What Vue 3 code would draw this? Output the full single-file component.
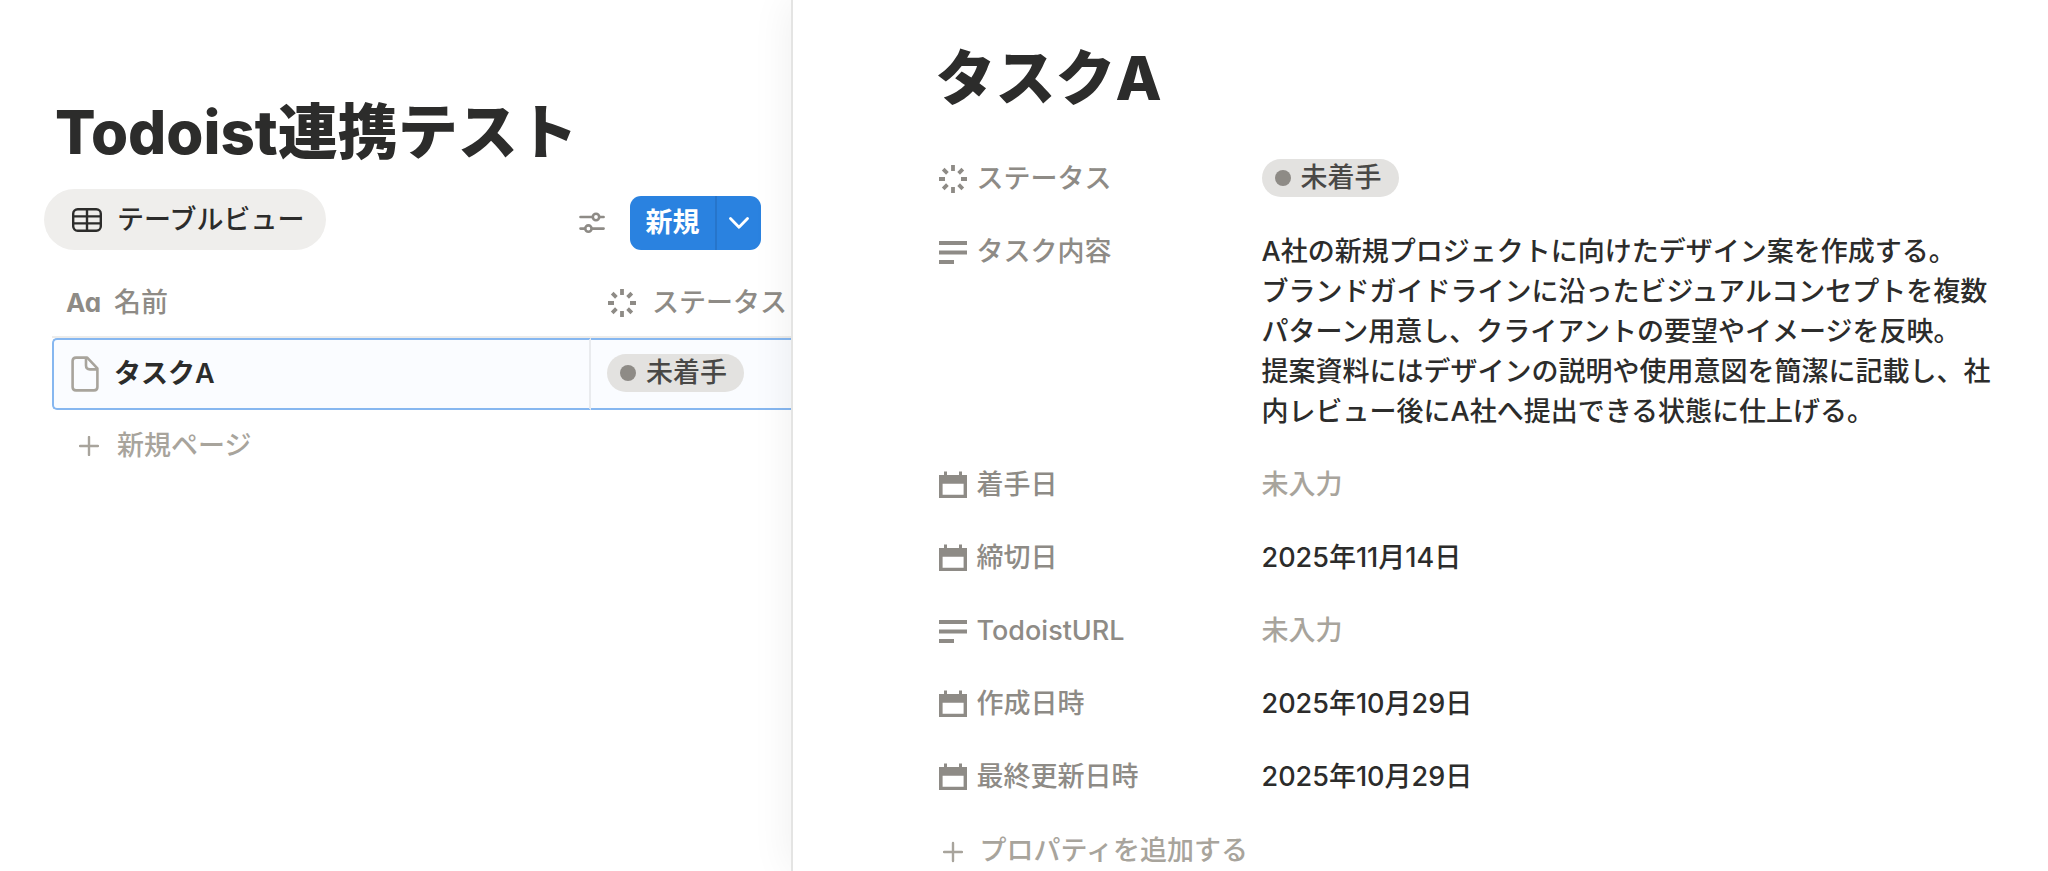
<template>
  <div class="layout">
    <main class="database">
      <h1 class="page-title">Todoist連携テスト</h1>
      <div class="toolbar">
        <button class="view-tab">
          <svg width="30" height="24" viewBox="0 0 30 24" fill="none" stroke="currentColor" stroke-width="2.4">
            <rect x="1.2" y="1.2" width="27.6" height="21.6" rx="4.5" />
            <path d="M1 8.4H29M1 15.4H29M15 1V23" />
          </svg>
          <span>テーブルビュー</span>
        </button>
        <div class="actions">
          <button class="settings" aria-label="設定">
            <svg width="26" height="22" viewBox="0 0 26 22" fill="none" stroke="currentColor" stroke-width="2.6" stroke-linecap="round">
              <circle cx="17" cy="5" r="3.2" />
              <circle cx="9.4" cy="16.6" r="3.2" />
              <path d="M1.5 5H13.6M20.4 5H24.6M1.5 16.6H6M12.8 16.6H24.6" />
            </svg>
          </button>
          <div class="new-group">
            <button class="new-main">新規</button>
            <button class="new-more" aria-label="その他">
              <svg width="20" height="12" viewBox="0 0 20 12" fill="none" stroke="currentColor" stroke-width="2.8" stroke-linecap="round" stroke-linejoin="round">
                <path d="M1.5 1.6L10 10.2L18.5 1.6" />
              </svg>
            </button>
          </div>
        </div>
      </div>

      <table class="table">
        <thead>
          <tr>
            <th class="col-name">
              <div class="head"><span class="aa">Aa</span><span>名前</span></div>
            </th>
            <th>
              <div class="head head-status">
                <svg width="28" height="28" viewBox="0 0 28 28" stroke="currentColor" stroke-width="3.8">
                  <path :d="rays" />
                </svg>
                <span>ステータス</span>
              </div>
            </th>
          </tr>
        </thead>
        <tbody>
          <tr>
            <td>
              <div class="name">
                <svg width="28" height="36" viewBox="0 0 28 36" fill="none" stroke="currentColor" stroke-width="2.6" stroke-linejoin="round">
                  <path d="M5 1.6H16.2L26.4 12.4V31Q26.4 34.4 23 34.4H5Q1.6 34.4 1.6 31V5Q1.6 1.6 5 1.6Z" />
                  <path d="M15 2V9.6Q15 13.4 18.8 13.4H26" />
                </svg>
                <span>タスクA</span>
              </div>
            </td>
            <td><span class="tag">未着手</span></td>
          </tr>
        </tbody>
      </table>
      <button class="new-page">
        <svg width="20" height="20" viewBox="0 0 20 20" stroke="currentColor" stroke-width="2.4" stroke-linecap="round">
          <path d="M10 1V19M1 10H19" />
        </svg>
        <span>新規ページ</span>
      </button>
    </main>

    <aside class="peek">
      <h2 class="page-title">タスクA</h2>
      <dl class="props">
        <div v-for="prop in props" :key="prop.label" class="prop">
          <dt>
            <svg v-if="prop.icon === 'status'" width="28" height="28" viewBox="0 0 28 28" stroke="currentColor" stroke-width="3.8">
              <path :d="rays" />
            </svg>
            <svg v-else-if="prop.icon === 'text'" width="28" height="28" viewBox="0 0 28 28" stroke="currentColor" stroke-width="3.8">
              <path d="M0 5H28M0 14.5H28M0 24H15" />
            </svg>
            <svg v-else width="28" height="28" viewBox="0 0 28 28" fill="currentColor">
              <path fill-rule="evenodd" d="M0 4H5V0.4H8V4H20V0.4H23V4H28V27H0ZM3.6 12.8V23.8H24.6V12.8Z" />
            </svg>
            <span>{{ prop.label }}</span>
          </dt>
          <dd>
            <span v-if="prop.icon === 'status'" class="tag">{{ prop.value }}</span>
            <span v-else-if="prop.value" class="value">{{ prop.value }}</span>
            <span v-else class="empty">未入力</span>
          </dd>
        </div>
      </dl>
      <button class="add-prop">
        <svg width="20" height="24" viewBox="0 0 20 24" stroke="currentColor" stroke-width="2.4" stroke-linecap="round">
          <path d="M10 4V22M1 13H19" />
        </svg>
        <span>プロパティを追加する</span>
      </button>
    </aside>
  </div>
</template>

<script setup>
import { ref } from 'vue';

// ステータスアイコンの放射線
const rays = 'M14 0V6M14 22V28M0 14H6M22 14H28M4.2 4.2L8.4 8.4M19.6 19.6L23.8 23.8M4.2 23.8L8.4 19.6M19.6 8.4L23.8 4.2';

const content = `A社の新規プロジェクトに向けたデザイン案を作成する。
ブランドガイドラインに沿ったビジュアルコンセプトを複数パターン用意し、クライアントの要望やイメージを反映。
提案資料にはデザインの説明や使用意図を簡潔に記載し、社内レビュー後にA社へ提出できる状態に仕上げる。`;

const props = ref([
  { icon: 'status', label: 'ステータス', value: '未着手' },
  { icon: 'text', label: 'タスク内容', value: content },
  { icon: 'date', label: '着手日', value: '' },
  { icon: 'date', label: '締切日', value: '2025年11月14日' },
  { icon: 'text', label: 'TodoistURL', value: '' },
  { icon: 'date', label: '作成日時', value: '2025年10月29日' },
  { icon: 'date', label: '最終更新日時', value: '2025年10月29日' }
]);
</script>

<style>
body {
  background: #fff;
}
</style>

<style scoped>
.layout {
  display: flex;
  min-height: 100vh;
  overflow: hidden;
  font-family: Inter, "Noto Sans CJK JP", sans-serif;
  font-size: 27px;
  line-height: 40px;
  font-weight: 500;
  color: #2c2c2b;
}

button {
  display: flex;
  align-items: center;
  padding: 0;
  border: none;
  background: none;
  font: inherit;
  color: inherit;
  white-space: nowrap;
  cursor: pointer;
}

svg {
  flex: none;
}

.page-title {
  margin: 0;
  font-size: 60px;
  line-height: 74px;
  font-weight: 800;
}

/* 左側: データベース */
.database {
  flex: 0 0 38.6%;
  min-width: 0;
  box-sizing: border-box;
  padding: 95px 0 0 52px;
  overflow: hidden;
}

.database .page-title {
  padding-left: 3px;
  white-space: nowrap;
}

.toolbar {
  display: flex;
  align-items: flex-end;
  justify-content: space-between;
  margin: 20px 30px 20px -8px;
}

.view-tab {
  gap: 15px;
  height: 61px;
  padding: 0 22px 0 28px;
  border-radius: 31px;
  background: #efeeec;
}

.actions {
  display: flex;
  gap: 25px;
}

.settings {
  color: #8e8b86;
}

.new-group {
  display: flex;
  height: 54px;
  border-radius: 11px;
  overflow: hidden;
  background: #2a82e0;
  color: #fff;
}

.new-main {
  padding: 0 15px 0 16px;
  border-right: 2px solid #2675cb;
  font-weight: 600;
}

.new-more {
  justify-content: center;
  width: 44px;
}

.table {
  width: 1000px;
  table-layout: fixed;
  border-collapse: separate;
  border-spacing: 0;
}

.col-name {
  width: 539px;
}

th {
  height: 66px;
  padding: 0;
  border-bottom: 2px solid #edecea;
  font-weight: 500;
  color: #8e8b86;
}

.head {
  display: flex;
  align-items: center;
  gap: 14px;
  padding-left: 14px;
}

.head-status {
  gap: 16px;
  padding-left: 17px;
}

.aa {
  width: 34px;
  font-weight: 700;
  font-size: 26px;
  font-feature-settings: "cv11";
}

td {
  height: 68px;
  padding: 0 0 0 16px;
  border-top: 2px solid #86b7f0;
  border-bottom: 2px solid #86b7f0;
  background: #fafcff;
}

td:first-child {
  padding-left: 17px;
  border-left: 2px solid #86b7f0;
  border-right: 2px solid #e9ebee;
  border-radius: 5px 0 0 5px;
}

.name {
  display: flex;
  align-items: center;
  gap: 15px;
  font-weight: 600;
}

.name svg {
  color: #a8a49c;
}

.tag {
  display: inline-flex;
  align-items: center;
  gap: 10px;
  height: 38px;
  padding: 0 17px 0 13px;
  border-radius: 19px;
  background: #e3e2e0;
  color: #494846;
  vertical-align: top;
}

.tag::before {
  content: "";
  width: 16px;
  height: 16px;
  border-radius: 50%;
  background: #8e8b86;
}

.new-page {
  gap: 18px;
  height: 72px;
  padding-left: 27px;
  color: #a8a49c;
}

/* 右側: サイドピーク */
.peek {
  flex: 1;
  min-width: 0;
  padding: 41px 53px 0 146px;
  border-left: 2px solid #e4e4e3;
  background: #fff;
  box-shadow: 0 0 40px rgba(0, 0, 0, 0.07);
}

.peek .page-title {
  margin-left: -3px;
}

.props {
  display: grid;
  gap: 1px;
  margin: 28px 0 0;
}

.prop {
  display: flex;
  padding: 16px 0;
}

dt {
  display: flex;
  align-items: center;
  gap: 10px;
  flex: 0 0 323px;
  height: 40px;
  color: #8e8b86;
}

dd {
  flex: 1;
  min-width: 0;
  margin: 0;
}

.value {
  white-space: pre-line;
}

.empty {
  color: #a8a49c;
}

.add-prop {
  gap: 17px;
  margin-top: 18px;
  padding-left: 4px;
  color: #a8a49c;
}
</style>
